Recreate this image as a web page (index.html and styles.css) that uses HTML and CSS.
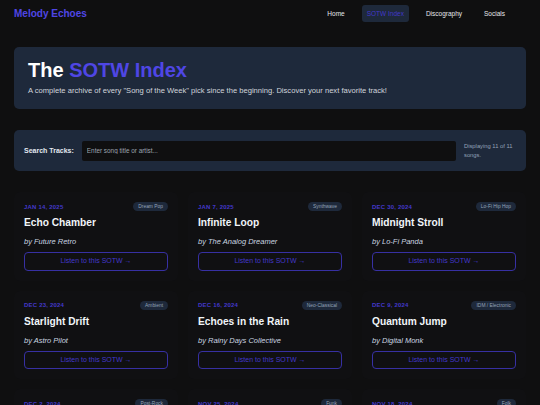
FILE: index.html
```html
<!DOCTYPE html>
<html lang="en">
<head>
<meta charset="utf-8">
<title>SOTW Index - Melody Echoes</title>
<link rel="stylesheet" href="styles.css">
</head>
<body>
<header class="nav">
  <div class="logo">Melody Echoes</div>
  <nav class="links">
    <a href="#" class="link">Home</a>
    <a href="#" class="link active">SOTW Index</a>
    <a href="#" class="link">Discography</a>
    <a href="#" class="link">Socials</a>
  </nav>
</header>
<main class="main">
  <section class="hero">
    <h1 class="hero-title">The <span class="accent">SOTW Index</span></h1>
    <p class="hero-sub">A complete archive of every "Song of the Week" pick since the beginning. Discover your next favorite track!</p>
  </section>
  <section class="search">
    <label class="search-label" for="q">Search Tracks:</label>
    <input id="q" class="search-input" type="text" placeholder="Enter song title or artist...">
    <div class="search-count">Displaying 11 of 11 songs.</div>
  </section>
  <section class="grid">
    <article class="card">
      <div class="card-head"><span class="date">JAN 14, 2025</span><span class="badge">Dream Pop</span></div>
      <h2 class="song">Echo Chamber</h2>
      <p class="artist">by Future Retro</p>
      <a href="#" class="listen">Listen to this SOTW →</a>
    </article>
    <article class="card">
      <div class="card-head"><span class="date">JAN 7, 2025</span><span class="badge">Synthwave</span></div>
      <h2 class="song">Infinite Loop</h2>
      <p class="artist">by The Analog Dreamer</p>
      <a href="#" class="listen">Listen to this SOTW →</a>
    </article>
    <article class="card">
      <div class="card-head"><span class="date">DEC 30, 2024</span><span class="badge">Lo-Fi Hip Hop</span></div>
      <h2 class="song">Midnight Stroll</h2>
      <p class="artist">by Lo-Fi Panda</p>
      <a href="#" class="listen">Listen to this SOTW →</a>
    </article>
    <article class="card">
      <div class="card-head"><span class="date">DEC 23, 2024</span><span class="badge">Ambient</span></div>
      <h2 class="song">Starlight Drift</h2>
      <p class="artist">by Astro Pilot</p>
      <a href="#" class="listen">Listen to this SOTW →</a>
    </article>
    <article class="card">
      <div class="card-head"><span class="date">DEC 16, 2024</span><span class="badge">Neo-Classical</span></div>
      <h2 class="song">Echoes in the Rain</h2>
      <p class="artist">by Rainy Days Collective</p>
      <a href="#" class="listen">Listen to this SOTW →</a>
    </article>
    <article class="card">
      <div class="card-head"><span class="date">DEC 9, 2024</span><span class="badge">IDM / Electronic</span></div>
      <h2 class="song">Quantum Jump</h2>
      <p class="artist">by Digital Monk</p>
      <a href="#" class="listen">Listen to this SOTW →</a>
    </article>
    <article class="card">
      <div class="card-head"><span class="date">DEC 2, 2024</span><span class="badge">Post-Rock</span></div>
      <h2 class="song">Glass Horizons</h2>
      <p class="artist">by The Quiet Atlas</p>
      <a href="#" class="listen">Listen to this SOTW →</a>
    </article>
    <article class="card">
      <div class="card-head"><span class="date">NOV 25, 2024</span><span class="badge">Funk</span></div>
      <h2 class="song">Neon Groove</h2>
      <p class="artist">by Velvet Static</p>
      <a href="#" class="listen">Listen to this SOTW →</a>
    </article>
    <article class="card">
      <div class="card-head"><span class="date">NOV 18, 2024</span><span class="badge">Folk</span></div>
      <h2 class="song">Autumn Letters</h2>
      <p class="artist">by Willow &amp; Pine</p>
      <a href="#" class="listen">Listen to this SOTW →</a>
    </article>
    <article class="card">
      <div class="card-head"><span class="date">NOV 11, 2024</span><span class="badge">Indie Rock</span></div>
      <h2 class="song">Paper Satellites</h2>
      <p class="artist">by Northbound</p>
      <a href="#" class="listen">Listen to this SOTW →</a>
    </article>
    <article class="card">
      <div class="card-head"><span class="date">NOV 4, 2024</span><span class="badge">Chillwave</span></div>
      <h2 class="song">Sunset Static</h2>
      <p class="artist">by Coastal Memory</p>
      <a href="#" class="listen">Listen to this SOTW →</a>
    </article>
  </section>
</main>
</body>
</html>
```

FILE: styles.css
```css
* { box-sizing: border-box; }

html, body {
  margin: 0;
  padding: 0;
  background: #0f0f10;
  color: #e5e7eb;
  font-family: "Liberation Sans", Arial, sans-serif;
}

.nav {
  height: 27px;
  display: flex;
  align-items: center;
  justify-content: space-between;
  padding: 0 30px 0 14px;
}

.logo {
  font-size: 10px;
  font-weight: bold;
  color: #4f46e5;
}

.links {
  display: flex;
  align-items: center;
  gap: 12px;
}

.link {
  font-size: 6.5px;
  color: #e5e7eb;
  text-decoration: none;
  padding: 0 5px;
  height: 17px;
  line-height: 17px;
  border-radius: 3px;
}

.link.active {
  background: #1e293b;
  color: #4338ca;
}

.main {
  padding: 20px 14px 0;
}

.hero {
  background: #1e293b;
  border-radius: 5px;
  padding: 12px 14px 14px;
  height: 62px;
}

.hero-title {
  margin: 0;
  font-size: 20px;
  line-height: 23px;
  font-weight: bold;
  color: #ffffff;
}

.accent { color: #4f46e5; }

.hero-sub {
  margin: 4px 0 0;
  font-size: 7.6px;
  line-height: 9px;
  color: #d1d5db;
}

.search {
  margin-top: 21px;
  background: #1e293b;
  border-radius: 5px;
  height: 41px;
  padding: 0 10px;
  display: flex;
  align-items: center;
  gap: 8px;
}

.search-label {
  font-size: 7px;
  font-weight: bold;
  color: #e2e8f0;
  white-space: nowrap;
}

.search-input {
  flex: 1;
  height: 20px;
  background: #0f0f10;
  border: none;
  border-radius: 2px;
  padding: 0 5px;
  font-family: "Liberation Sans", Arial, sans-serif;
  font-size: 6.4px;
  color: #e5e7eb;
  outline: none;
}

.search-input::placeholder { color: #9ca3af; }

.search-count {
  width: 52px;
  font-size: 5.8px;
  line-height: 8.3px;
  color: #94a3b8;
}

.grid {
  margin-top: 21px;
  display: grid;
  grid-template-columns: repeat(3, 1fr);
  gap: 10px;
}

.card {
  background: #101012;
  border-radius: 6px;
  padding: 10px;
}

.card-head {
  display: flex;
  justify-content: space-between;
  align-items: center;
  height: 9px;
}

.date {
  font-size: 6px;
  font-weight: bold;
  letter-spacing: 0.2px;
  color: #4338ca;
}

.badge {
  background: #1e293b;
  color: #94a3b8;
  font-size: 4.9px;
  height: 9px;
  line-height: 9px;
  padding: 0 5px;
  border-radius: 5px;
}

.song {
  margin: 6px 0 0;
  font-size: 10.2px;
  line-height: 12px;
  font-weight: bold;
  color: #f1f5f9;
}

.artist {
  margin: 8px 0 0;
  font-size: 7.5px;
  line-height: 9px;
  font-style: italic;
  color: #cbd5e1;
}

.listen {
  display: block;
  margin-top: 6px;
  height: 18.5px;
  line-height: 16.5px;
  border: 1px solid #3730a3;
  border-radius: 4px;
  text-align: center;
  font-size: 7px;
  color: #4338ca;
  text-decoration: none;
}
```
